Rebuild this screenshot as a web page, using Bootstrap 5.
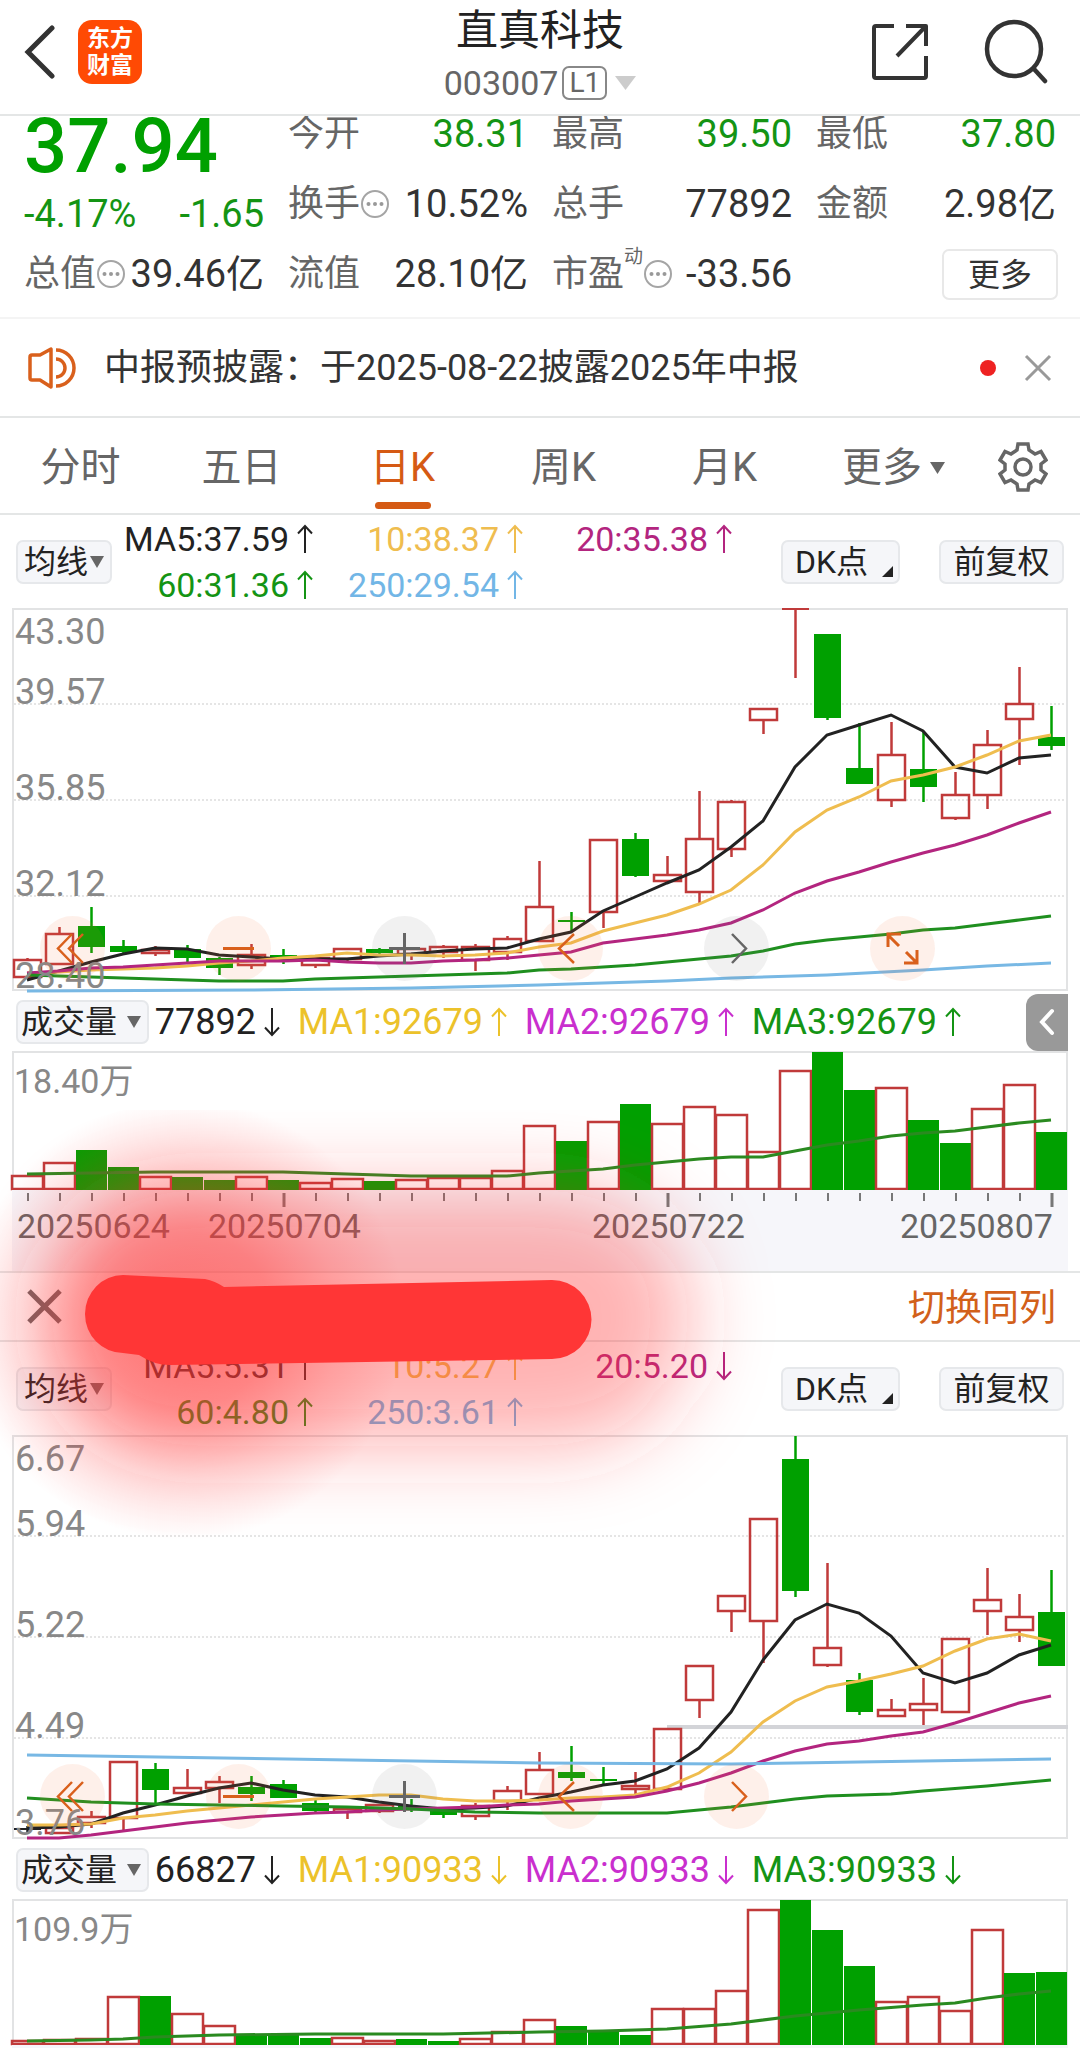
<!DOCTYPE html>
<html lang="zh-CN">
<head>
<meta charset="utf-8">
<meta name="viewport" content="width=device-width, initial-scale=1">
<title>直真科技 003007</title>
<link href="https://cdn.jsdelivr.net/npm/bootstrap@5.3.0/dist/css/bootstrap.min.css" rel="stylesheet">
<style>
:root { --up:#c03a3a; --down:#00a000; --accent:#d55a14; --line:#e4e6e6; }
body { font-family: Roboto, "Noto Sans CJK SC", sans-serif; color:#333; background:#fff; overflow-x:hidden; }
button { font-family: inherit; }
svg { display:block; }
.plain { background:none; border:0; padding:0; color:inherit; }
.topbar { height:116px; border-bottom:2px solid var(--line); z-index:2; padding:0 24px; }
.topbar .side { width:240px; padding-bottom:10px; gap:54px; }
.topbar .side.start { gap:22px; }
.topbar .side.end { padding-right:8px; }
.brand { width:64px; height:64px; border-radius:14px; background:#ff4a04; color:#fff; font-size:23px; line-height:27px; font-weight:700; }
.stock-name { font-size:42px; line-height:54px; color:#222; margin:0; font-weight:400; }
.stock-code { font-size:34px; line-height:50px; color:#666; }
.level { font-size:28px; line-height:30px; border:2px solid #888; border-radius:7px; padding:0 5px; }
.quote { display:grid; grid-template-columns:repeat(4,minmax(0,1fr)); column-gap:24px; padding:0 24px 8px; margin-top:-17px; border-bottom:2px solid #f4f4f4; font-size:38px; }
.quote .cell { height:70px; line-height:70px; white-space:nowrap; }
.quote .cap { font-size:36px; color:#666; }
.price { font-size:76px; line-height:94px; font-weight:500; }
.chg { line-height:42px; margin-bottom:4px; }
.fell { color:#149414; }
.price.fell { color:#00a000; }
.tiny-top { font-size:19px; line-height:20px; align-self:flex-start; margin-top:8px; color:#666; }
.more-btn { font-size:32px; line-height:48px; height:51px; width:116px; margin-right:-2px; border:2px solid #e8e8e8; border-radius:7px; background:#fff; color:#333; padding:0; }
.notice { height:99px; border-bottom:2px solid var(--line); padding:0 28px; font-size:36px; }
.dot { width:16px; height:16px; border-radius:50%; background:#ee2222; }
.tabs { display:grid; grid-template-columns:repeat(6,minmax(0,1fr)) 114px; height:97px; border-bottom:2px solid var(--line); font-size:40px; }
.tabs a { color:#666; text-decoration:none; text-align:center; line-height:95px; position:relative; padding-top:2px; }
.tabs a.active { color:var(--accent); }
.tabs a.active::after { content:""; position:absolute; left:50%; bottom:6px; width:56px; height:7px; margin-left:-28px; border-radius:4px; background:var(--accent); }
.mabar { height:93px; padding:1px 16px 0; }
.mabar .figures { display:grid; grid-template-columns:201px 210px 209px; font-size:34px; line-height:45px; }
.mabar .figures > span, .volbar span { display:flex; align-items:center; justify-content:flex-end; white-space:nowrap; }
.chip { height:44px; line-height:40px; font-size:32px; padding:0; border:2px solid #e6e8eb; border-radius:7px; background:#f5f6f9; color:#222; position:relative; }
.chip.dk { width:119px; padding-right:18px; }
.chip.fq { width:125px; margin-left:39px; }
.dk::after { content:""; position:absolute; right:5px; bottom:5px; border-left:11px solid transparent; border-bottom:11px solid #222; }
.pick { position:relative; display:block; }
.pick select { appearance:none; display:block; width:96px; padding:0 0 0 6px; outline:0; }
.pick::after { content:""; position:absolute; right:8px; top:16px; border:7px solid transparent; border-top:12px solid #666; border-bottom:0; }
.pick.wide select { width:133px; padding-left:3px; }
.c5{color:#222}.c10{color:#efbd4f}.c20{color:#b3257f}.c60{color:#149414}.c250{color:#72b6e6}
.v1{color:#ecc22a}.v2{color:#c92fce}
.plot { margin:0 12px; position:relative; }
.plot svg.graph { width:100%; height:auto; overflow:visible; }
.plot text { font-size:36px; fill:#888; }
.plot text.vol { font-size:34px; }
.axis { background:#f6f6fa; }
.axis text { font-size:34px; fill:#666; }
.tools { position:absolute; left:28px; bottom:10px; gap:101px; }
.tools button { width:65px; height:65px; border-radius:50%; background:rgba(246,120,60,.11); color:#d9601c; }
.tools button.off { background:rgba(120,120,120,.1); color:#666; }
.tools svg { width:65px; height:65px; }
.volbar { height:60px; padding:2px 0 0 16px; font-size:36px; }
.volbar .own { width:131px; }
.volbar .avg { width:227px; }
.fold { width:42px; height:57px; margin-right:12px; border-radius:12px 0 0 12px; background:#999; color:#fff; }
.switch { height:71px; border-top:2px solid var(--line); border-bottom:2px solid var(--line); padding:0 24px 0 27px; position:relative; z-index:3; }
.switch a { color:#d2601a; font-size:37px; line-height:60px; padding-top:5px; text-decoration:none; }
.brush { position:absolute; left:0; top:-163px; width:780px; height:430px; pointer-events:none; }
.tail { height:3px; overflow:hidden; }
</style>
</head>
<body>
<svg width="0" height="0" class="position-absolute" aria-hidden="true">
  <symbol id="up" viewBox="0 0 16 30"><path d="M8 29V2M1 9.500L8 2l7 7.500" fill="none" stroke="currentColor" stroke-width="2"/></symbol>
  <symbol id="down" viewBox="0 0 16 30"><path d="M8 1v27M1 20.500L8 28l7-7.500" fill="none" stroke="currentColor" stroke-width="2"/></symbol>
  <symbol id="info" viewBox="0 0 30 30"><circle cx="15" cy="15" r="13" fill="none" stroke="#a5a5a5" stroke-width="2"/><g fill="#999"><circle cx="8.500" cy="15" r="2"/><circle cx="15" cy="15" r="2"/><circle cx="21.500" cy="15" r="2"/></g></symbol>
  <symbol id="first" viewBox="0 0 65 65"><path d="M32 18L18 32.500 32 47M43 18L29 32.500 43 47" fill="none" stroke="currentColor" stroke-width="2.500"/></symbol>
  <symbol id="minus" viewBox="0 0 65 65"><path d="M17 32.500h31" stroke="currentColor" stroke-width="3"/></symbol>
  <symbol id="plus" viewBox="0 0 65 65"><path d="M17 32.500h31M32.500 17v31" stroke="currentColor" stroke-width="3"/></symbol>
  <symbol id="prev" viewBox="0 0 65 65"><path d="M36 18L21 32.500 36 47" fill="none" stroke="currentColor" stroke-width="2.500"/></symbol>
  <symbol id="next" viewBox="0 0 65 65"><path d="M28 18l14 14.500L28 47" fill="none" stroke="currentColor" stroke-width="2.500"/></symbol>
  <symbol id="grow" viewBox="0 0 65 65"><path d="M29 30L18 19M31 18H18v13M36 36l11 11M47 34v13H34" fill="none" stroke="currentColor" stroke-width="3"/></symbol>
</svg>

<header class="topbar d-flex align-items-center justify-content-between position-relative bg-white">
  <div class="side start d-flex align-items-center">
    <button class="plain" aria-label="返回"><svg width="32" height="54" viewBox="0 0 32 54"><path d="M28 3L4 27l24 24" fill="none" stroke="#333" stroke-width="5" stroke-linecap="round"/></svg></button>
    <div class="brand d-flex flex-column align-items-center justify-content-center"><span>东方</span><span>财富</span></div>
  </div>
  <div class="text-center align-self-start pt-1">
    <h1 class="stock-name">直真科技</h1>
    <div class="stock-code d-flex align-items-center justify-content-center"><span>003007</span><span class="level ms-1">L1</span><svg class="ms-2" width="21" height="14" viewBox="0 0 21 14"><path d="M0 0h21L10.500 14z" fill="#ccc"/></svg></div>
  </div>
  <div class="side end d-flex align-items-center justify-content-end">
    <button class="plain" aria-label="分享"><svg width="56" height="58" viewBox="0 0 56 58" fill="none" stroke="#333" stroke-width="4" stroke-linejoin="round"><path d="M22 3H4Q2 3 2 5v48q0 2 2 2h48q2 0 2-2V33M34 3h20v20M54 3L25 33"/></svg></button>
    <button class="plain" aria-label="搜索"><svg width="66" height="66" viewBox="0 0 66 66" fill="none" stroke="#333" stroke-width="4.500"><circle cx="32" cy="30" r="27"/><path d="M52 50l11 12" stroke-linecap="round"/></svg></button>
  </div>
</header>

<section class="quote">
  <div>
    <div class="price fell">37.94</div>
    <div class="chg fell d-flex justify-content-between"><span>-4.17%</span><span>-1.65</span></div>
    <div class="cell d-flex align-items-center justify-content-between"><span class="cap d-flex align-items-center">总值<svg width="30" height="30"><use href="#info"/></svg></span><span>39.46亿</span></div>
  </div>
  <div>
    <div class="cell d-flex justify-content-between"><span class="cap">今开</span><span class="fell">38.31</span></div>
    <div class="cell d-flex justify-content-between"><span class="cap d-flex align-items-center">换手<svg width="30" height="30"><use href="#info"/></svg></span><span>10.52%</span></div>
    <div class="cell d-flex justify-content-between"><span class="cap">流值</span><span>28.10亿</span></div>
  </div>
  <div>
    <div class="cell d-flex justify-content-between"><span class="cap">最高</span><span class="fell">39.50</span></div>
    <div class="cell d-flex justify-content-between"><span class="cap">总手</span><span>77892</span></div>
    <div class="cell d-flex justify-content-between"><span class="cap d-flex align-items-center">市盈<span class="tiny-top">动</span><svg width="30" height="30"><use href="#info"/></svg></span><span>-33.56</span></div>
  </div>
  <div>
    <div class="cell d-flex justify-content-between"><span class="cap">最低</span><span class="fell">37.80</span></div>
    <div class="cell d-flex justify-content-between"><span class="cap">金额</span><span>2.98亿</span></div>
    <div class="cell d-flex align-items-center justify-content-end"><button class="more-btn">更多</button></div>
  </div>
</section>

<section class="notice d-flex align-items-center">
  <svg width="48" height="42" viewBox="0 0 48 42" fill="none" stroke="#d9601c" stroke-width="3.500" stroke-linejoin="round"><path d="M2 10q0-2 2-2h8L23 2v38l-11-7H4q-2 0-2-2z"/><path d="M28 3a18 18 0 0 1 0 36M28 12a9 9 0 0 1 0 18"/></svg>
  <span class="ms-4 ps-1 flex-grow-1">中报预披露：于2025-08-22披露2025年中报</span>
  <span class="dot me-4"></span>
  <button class="plain ms-1" aria-label="关闭"><svg width="28" height="28" viewBox="0 0 28 28"><path d="M2 2l24 24M26 2L2 26" stroke="#999" stroke-width="3"/></svg></button>
</section>

<nav class="tabs">
  <a href="#">分时</a><a href="#">五日</a><a href="#" class="active">日K</a><a href="#">周K</a><a href="#">月K</a>
  <a href="#" class="d-flex align-items-center justify-content-center ps-3">更多<svg class="ms-2" width="15" height="12" viewBox="0 0 15 12"><path d="M0 0h15L7.500 12z" fill="#666"/></svg></a>
  <button class="plain d-flex align-items-center justify-content-center" aria-label="设置"><svg width="50" height="50" viewBox="0 0 50 50" fill="none" stroke="#666" stroke-width="3.500" stroke-linejoin="miter"><path d="M20 2h10l1 6 6 4 6-2.500 5 8.500-5 4v6l5 4-5 8.500-6-2.500-6 4-1 6H20l-1-6-6-4-6 2.500L2 32l5-4v-6l-5-4 5-8.500 6 2.500 6-4z"/><circle cx="25" cy="25" r="8"/></svg></button>
</nav>

<section class="mabar d-flex">
  <label class="pick mt-4"><select class="chip" aria-label="均线"><option>均线</option></select></label>
  <div class="figures">
    <span class="c5">MA5:37.59<svg class="ms-2" width="16" height="30"><use href="#up"/></svg></span>
    <span class="c10">10:38.37<svg class="ms-2" width="16" height="30"><use href="#up"/></svg></span>
    <span class="c20">20:35.38<svg class="ms-2" width="16" height="30"><use href="#up"/></svg></span>
    <span class="c60">60:31.36<svg class="ms-2" width="16" height="30"><use href="#up"/></svg></span>
    <span class="c250">250:29.54<svg class="ms-2" width="16" height="30"><use href="#up"/></svg></span>
  </div>
  <button class="chip dk ms-auto mt-4">DK点</button>
  <button class="chip fq mt-4">前复权</button>
</section>

<div class="plot">
  <svg class="graph" id="k1" viewBox="0 0 1056 383"></svg>
  <div class="tools d-flex">
    <button class="plain" aria-label="最前"><svg><use href="#first"/></svg></button>
    <button class="plain" aria-label="缩小"><svg><use href="#minus"/></svg></button>
    <button class="plain off" aria-label="放大"><svg><use href="#plus"/></svg></button>
    <button class="plain" aria-label="左移"><svg><use href="#prev"/></svg></button>
    <button class="plain off" aria-label="右移"><svg><use href="#next"/></svg></button>
    <button class="plain" aria-label="全屏"><svg><use href="#grow"/></svg></button>
  </div>
</div>

<section class="volbar d-flex align-items-center">
  <label class="pick wide"><select class="chip" aria-label="成交量"><option>成交量</option></select></label>
  <span class="own c5">77892<svg class="ms-2" width="16" height="32"><use href="#down"/></svg></span>
  <span class="avg v1">MA1:92679<svg class="ms-2" width="16" height="32"><use href="#up"/></svg></span>
  <span class="avg v2">MA2:92679<svg class="ms-2" width="16" height="32"><use href="#up"/></svg></span>
  <span class="avg c60">MA3:92679<svg class="ms-2" width="16" height="32"><use href="#up"/></svg></span>
  <button class="plain fold ms-auto d-flex align-items-center justify-content-center" aria-label="展开"><svg width="16" height="28" viewBox="0 0 16 28"><path d="M13 3L3 14l10 11" fill="none" stroke="#fff" stroke-width="4" stroke-linecap="round"/></svg></button>
</section>
<div class="plot"><svg class="graph" id="v1" viewBox="0 0 1056 139"></svg></div>
<div class="plot axis"><svg class="graph" id="a1" viewBox="0 0 1056 81"></svg></div>

<section class="switch d-flex align-items-center justify-content-between">
  <button class="plain" aria-label="关闭对比"><svg width="35" height="35" viewBox="0 0 35 35"><path d="M2 2l31 31M33 2L2 33" stroke="#666" stroke-width="5"/></svg></button>
  <a href="#">切换同列</a>
  <svg class="brush" viewBox="0 1110 780 430" aria-hidden="true">
    <defs>
      <filter id="soft" x="-50%" y="-80%" width="200%" height="260%" filterUnits="objectBoundingBox"><feGaussianBlur stdDeviation="40"/></filter>
      <radialGradient id="halo"><stop offset="0" stop-color="#ff3636" stop-opacity=".5"/><stop offset=".4" stop-color="#ff3636" stop-opacity=".4"/><stop offset=".7" stop-color="#ff3636" stop-opacity=".17"/><stop offset="1" stop-color="#ff3636" stop-opacity="0"/></radialGradient>
    </defs>
    <rect x="50" y="1190" width="640" height="256" rx="128" fill="#ff3636" fill-opacity=".37" filter="url(#soft)"/>
    <circle cx="185" cy="1320" r="220" fill="url(#halo)"/>
    <path d="M123 1275L205 1279q10 2 19 8L552 1280a39 39 0 0 1 0 79L170 1365q-16 0-31-10l-16-2a38 39 0 0 1 0-78z" fill="#ff3636"/>
  </svg>
</section>

<section class="mabar d-flex">
  <label class="pick mt-4"><select class="chip" aria-label="对比均线"><option>均线</option></select></label>
  <div class="figures">
    <span class="c5">MA5:5.31<svg class="ms-2" width="16" height="30"><use href="#up"/></svg></span>
    <span class="c10">10:5.27<svg class="ms-2" width="16" height="30"><use href="#up"/></svg></span>
    <span class="c20">20:5.20<svg class="ms-2" width="16" height="30"><use href="#down"/></svg></span>
    <span class="c60">60:4.80<svg class="ms-2" width="16" height="30"><use href="#up"/></svg></span>
    <span class="c250">250:3.61<svg class="ms-2" width="16" height="30"><use href="#up"/></svg></span>
  </div>
  <button class="chip dk ms-auto mt-4">DK点</button>
  <button class="chip fq mt-4">前复权</button>
</section>
<div class="plot">
  <svg class="graph" id="k2" viewBox="0 0 1056 404"></svg>
  <div class="tools d-flex">
    <button class="plain" aria-label="最前"><svg><use href="#first"/></svg></button>
    <button class="plain" aria-label="缩小"><svg><use href="#minus"/></svg></button>
    <button class="plain off" aria-label="放大"><svg><use href="#plus"/></svg></button>
    <button class="plain" aria-label="左移"><svg><use href="#prev"/></svg></button>
    <button class="plain" aria-label="右移"><svg><use href="#next"/></svg></button>
  </div>
</div>
<section class="volbar d-flex align-items-center">
  <label class="pick wide"><select class="chip" aria-label="对比成交量"><option>成交量</option></select></label>
  <span class="own c5">66827<svg class="ms-2" width="16" height="32"><use href="#down"/></svg></span>
  <span class="avg v1">MA1:90933<svg class="ms-2" width="16" height="32"><use href="#down"/></svg></span>
  <span class="avg v2">MA2:90933<svg class="ms-2" width="16" height="32"><use href="#down"/></svg></span>
  <span class="avg c60">MA3:90933<svg class="ms-2" width="16" height="32"><use href="#down"/></svg></span>
</section>
<div class="plot"><svg class="graph" id="v2" viewBox="0 0 1056 146"></svg></div>
<div class="plot axis tail"><svg class="graph" id="a2" viewBox="0 0 1056 81"></svg></div>

<script src="https://cdn.jsdelivr.net/npm/bootstrap@5.3.0/dist/js/bootstrap.bundle.min.js"></script>
<script>
// One slot per trading day; x is the middle of the slot.
const STEP = 32, RED = '#c03a3a', GREEN = '#00a000';
const cx = i => 15 + STEP * i;
const frame = h => `<path d="M1 ${h}V1H1055V${h}" fill="none" stroke="#e2e3e4" stroke-width="2"/>`;
const poly = (pts, c) => `<polyline fill="none" stroke="${c}" stroke-width="3" points="${pts.map(p => cx(p[0]) + ',' + p[1]).join(' ')}"/>`;
const seq = a => a.map((y, i) => [i, y]);

// Candle: [kind, high, body top, body bottom, low]
function candle([k, hi, t, b, lo], i) {
  const x = cx(i), c = k === 'r' ? RED : k === 'g' ? GREEN : '#222';
  if (k !== 'r') return `<path d="M${x + .5} ${hi}V${lo}" stroke="${c}" stroke-width="2.5"/><rect x="${x - 13}" y="${t}" width="27" height="${Math.max(b - t, 2)}" fill="${c}"/>`;
  const wick = `<path d="M${x + .5} ${hi}V${t}M${x + .5} ${b}V${lo}" stroke="${c}" stroke-width="2.5"/>`;
  return wick + (b > t ? `<rect x="${x - 13}" y="${t}" width="27" height="${b - t}" fill="none" stroke="${c}" stroke-width="2.5"/>`
    : `<path d="M${x - 13} ${t}h27" stroke="${c}" stroke-width="2"/>`);
}
function kChart(id, h, grid, labels, candles, lines, extra) {
  document.getElementById(id).innerHTML = frame(h) + `<path d="M0 ${h - 1}H1056" stroke="#e2e3e4" stroke-width="2"/>` +
    grid.map(y => `<path d="M2 ${y}H1054" stroke="#ddd" stroke-width="1.5" stroke-dasharray="2 2"/>`).join('') + extra +
    candles.map(candle).join('') + lines.map(l => poly(l[1], l[0])).join('') +
    labels.map(l => `<text x="3" y="${l[1]}">${l[0]}</text>`).join('');
}
function vChart(id, h, label, bars, line) {
  document.getElementById(id).innerHTML = frame(h) + bars.map(([k, t], i) => k === 'g'
    ? `<rect x="${STEP * i}" y="${t}" width="31" height="${h - t}" fill="${GREEN}"/>`
    : `<rect x="${STEP * i}" y="${t}" width="31" height="${h - t - 1}" fill="none" stroke="${RED}" stroke-width="2.5"/>`).join('') +
    poly(line, '#2a8a20') + `<text class="vol" x="2" y="42">${label}</text>`;
}
function axis(id, dates) {
  let s = '';
  for (let i = 0; i < 33; i++) { const m = i === 8 || i === 20 || i === 32; s += `<path d="M${cx(i) + 1} 3V${m ? 17 : 11}" stroke="#777" stroke-width="${m ? 3 : 2}"/>`; }
  document.getElementById(id).innerHTML = s + dates.map(d => `<text x="${d[1]}" y="48">${d[0]}</text>`).join('');
}

kChart('k1', 383, [96, 192, 288],
  [['43.30', 36], ['39.57', 96], ['35.85', 192], ['32.12', 288], ['28.40', 380]],
  [['r',350,352,369,369],['r',319,326,356,356],['g',299,318,339,345],['g',332,338,344,346],['r',338,342,345,348],['g',337,341,350,354],['g',349,350,360,367],['r',336,347,357,361],['g',341,347,349,356],['r',347,350,357,360],['r',340,341,351,354],['g',340,341,345,346],['r',339,341,346,352],['r',337,339,344,350],['r',336,339,352,363],['r',328,331,344,352],['r',253,299,333,333],['g',304,312,313,324],['r',232,232,304,320],['g',225,231,268,269],['r',248,267,273,276],['r',183,231,284,295],['r',192,194,241,249],['r',101,101,112,126],['r',1,1,1,70],['g',26,26,110,112],['g',115,160,176,176],['r',114,147,192,199],['g',124,161,179,194],['r',164,187,210,212],['r',122,137,187,201],['r',59,96,111,157],['g',98,129,138,142]],
  [['#222', seq([372,363,354,346,340,341,347,349,351,351,351,348,346,343,341,340,331,324,303,289,275,262,239,213,159,127,117,107,123,159,165,150,147])],
   ['#efbd4f', seq([365,364,362,361,360,358,355,353,350,348,345,347,347,348,347,345,339,335,323,315,307,296,282,257,224,202,189,173,167,159,147,133,127])],
   ['#b3257f', seq([365,363,360,359,357,355,353,353,353,352,354,355,355,353,352,350,347,344,335,331,327,322,315,302,285,273,264,254,245,237,227,215,204])],
   ['#1f8f1f', seq([367,368,369,370,371,372,373,373,373,371,370,369,368,367,366,365,362,361,359,357,354,351,348,343,336,332,329,326,322,320,316,312,308])],
   ['#78b8e4', [[0,383],[7,382],[12,380],[16,377],[18,375],[20,373],[22,370],[25,367],[28,362],[30,358],[32,355]]]], '');

vChart('v1', 139, '18.40万',
  [['r',125],['r',112],['g',99],['g',116],['r',126],['g',126],['g',129],['r',126],['g',129],['r',132],['r',128],['g',130],['r',129],['r',127],['r',127],['r',120],['r',75],['g',90],['r',71],['g',53],['r',73],['r',56],['r',64],['r',101],['r',20],['g',1],['g',39],['r',37],['g',69],['g',92],['r',58],['r',34],['g',81]],
  [[0,123],[2,122],[4,121],[6,121],[8,121],[10,123],[12,125],[14,125],[15,125],[16,122],[17,120],[18,118],[19,114],[20,111],[21,108],[22,106],[23,106],[24,100],[25,94],[26,90],[27,85],[28,82],[29,80],[30,76],[31,72],[32,69]]);
axis('a1', [['20250624', 5], ['20250704', 196], ['20250722', 580], ['20250807', 888]]);

kChart('k2', 404, [101, 202, 303],
  [['6.67', 36], ['5.94', 101], ['5.22', 202], ['4.49', 303], ['3.76', 400]],
  [['n',391,393,395,398],['r',390,393,398,398],['r',376,382,388,393],['r',327,327,383,397],['g',328,334,355,369],['r',334,353,358,358],['r',341,347,353,368],['g',341,352,359,366],['g',345,349,363,363],['g',363,368,376,377],['r',371,374,377,384],['r',369,370,376,378],['g',364,371,375,377],['g',373,375,380,383],['r',368,371,381,385],['r',351,356,366,375],['r',317,335,359,359],['g',311,337,343,346],['g',332,344,345,350],['r',337,351,354,359],['r',294,294,354,354],['r',231,231,265,283],['r',161,161,176,197],['r',84,84,186,228],['g',1,24,156,162],['r',128,213,230,232],['g',238,245,277,280],['r',264,275,281,281],['r',243,269,275,290],['r',204,204,277,277],['r',133,165,176,200],['r',159,182,195,207],['g',135,177,231,231]],
  [['#222', seq([393,392,389,378,370,361,353,348,355,360,362,367,371,374,373,371,363,357,350,346,334,313,277,225,185,169,178,201,238,248,238,220,210])],
   ['#efbd4f', seq([390,390,389,383,380,376,373,370,367,364,362,360,360,364,366,366,365,363,362,360,352,338,317,287,266,252,246,239,231,216,204,199,206])],
   ['#b3257f', seq([403,403,400,396,392,388,385,382,380,378,377,375,374,373,372,370,369,366,364,362,356,348,338,326,316,309,306,301,297,288,278,268,261])],
   ['#1f8f1f', [[0,363],[2,367],[4,369],[6,370],[8,371],[10,372],[12,374],[14,377],[16,378],[18,378],[20,378],[21,375],[22,372],[23,368],[24,364],[25,361],[27,359],[28,356],[30,351],[32,345]]],
   ['#78b8e4', [[0,320],[16,328],[22,329],[24,328],[28,326],[32,324]]]],
  '<path d="M655 292H1056" stroke="#d3d4d8" stroke-width="4"/>');

vChart('v2', 146, '109.9万',
  [['r',142],['r',141],['r',140],['r',98],['g',97],['r',115],['r',127],['g',136],['g',136],['g',139],['r',139],['r',142],['g',140],['g',142],['r',140],['r',133],['r',121],['g',127],['g',132],['g',136],['r',110],['r',110],['r',92],['r',11],['g',1],['g',31],['g',67],['r',103],['r',98],['r',112],['r',31],['g',74],['g',73]],
  [[0,142],[2,141],[3,140],[4,138],[6,136],[9,135],[13,135],[16,133],[18,132],[20,130],[22,125],[24,117],[26,111],[28,106],[29,104],[30,99],[31,95],[32,92]]);
axis('a2', []);
</script>
</body>
</html>
